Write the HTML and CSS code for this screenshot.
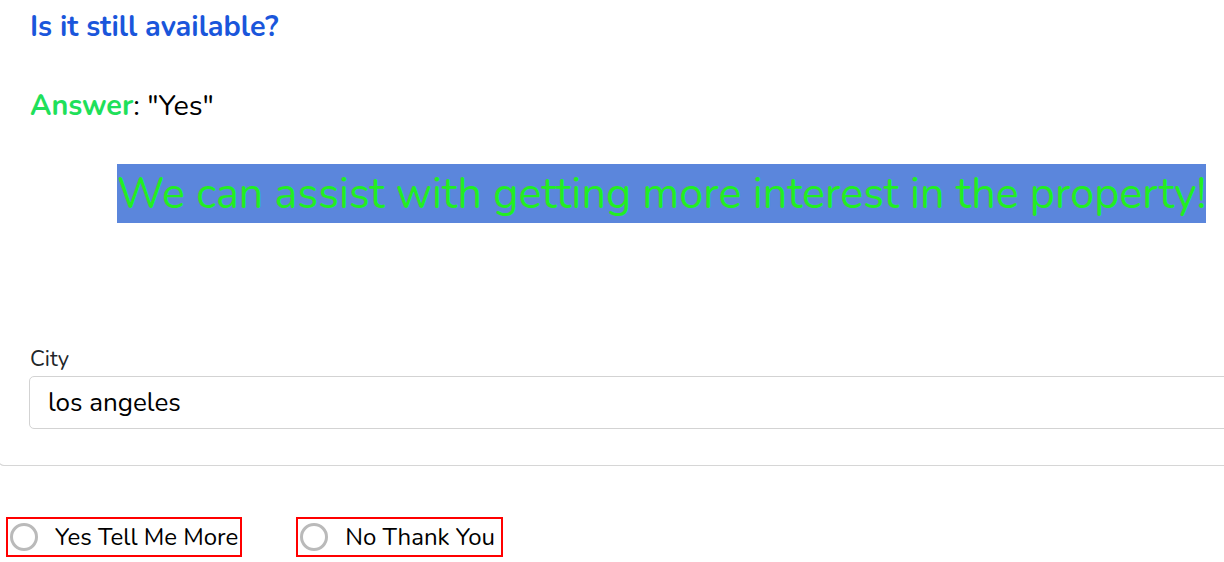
FILE: index.html
```html
<!DOCTYPE html>
<html>
<head>
<meta charset="utf-8">
<link rel="stylesheet" href="styles.css">
</head>
<body>
<div class="card">
  <h2 class="question">Is it still available?</h2>
  <p class="answer"><span class="answer-key">Answer</span>: "Yes"</p>
  <div class="promo"><span class="promo-text">We can assist with getting more interest in the property!</span></div>
  <div class="field">
    <label class="field-label">City</label>
    <div class="field-input">los angeles</div>
  </div>
</div>
<div class="choices">
  <label class="choice"><span class="radio"></span><span class="choice-text">Yes Tell Me More</span></label>
  <label class="choice choice-roomy"><span class="radio"></span><span class="choice-text">No Thank You</span></label>
</div>
</body>
</html>
```
FILE: styles.css
```css
html, body {
  margin: 0;
  padding: 0;
  overflow: hidden;
  background: #fff;
}
body {
  font-family: "Nunito", "Noto Sans", sans-serif;
  color: #000;
  width: 1224px;
}
.card {
  width: 1300px;
  margin-left: -2px;
  border: 1px solid #d6d6d6;
  border-top: 0;
  border-radius: 0 0 6px 6px;
  padding: 0 29px 36px 31px;
  box-sizing: border-box;
}
.question {
  margin: 0;
  padding-top: 8px;
  font-size: 28.8px;
  font-weight: 700;
  color: #1a56db;
  line-height: 38px;
}
.answer {
  margin: 42px 0 0 0;
  font-size: 28.8px;
  line-height: 36px;
}
.answer-key {
  color: #1fe05a;
  font-weight: 700;
}
.promo {
  margin-top: 40px;
  padding-left: 87px;
  height: 59px;
}
.promo-text {
  background: #5b86dc;
  color: #22ee22;
  font-size: 43.2px;
  line-height: 59px;
  display: inline-block;
  white-space: nowrap;
}
.field {
  margin-top: 122px;
}
.field-label {
  display: block;
  font-size: 22px;
  line-height: 28px;
  color: #212529;
}
.field-input {
  margin-top: 3px;
  margin-left: -1px;
  height: 53px;
  box-sizing: border-box;
  border: 1px solid #d3d3d3;
  border-radius: 5px;
  padding: 0 18px;
  font-size: 26px;
  line-height: 51px;
}
.choices {
  display: flex;
  gap: 54px;
  padding: 51px 0 0 6px;
}
.choice {
  display: flex;
  align-items: center;
  gap: 17px;
  height: 40px;
  box-sizing: border-box;
  border: 2px solid #f00;
  padding: 0 2px 0 2px;
  font-size: 24px;
}
.choice-roomy {
  padding-right: 6px;
}
.radio {
  width: 22px;
  height: 22px;
  border: 3px solid #bababa;
  border-radius: 50%;
  flex: none;
}
```
